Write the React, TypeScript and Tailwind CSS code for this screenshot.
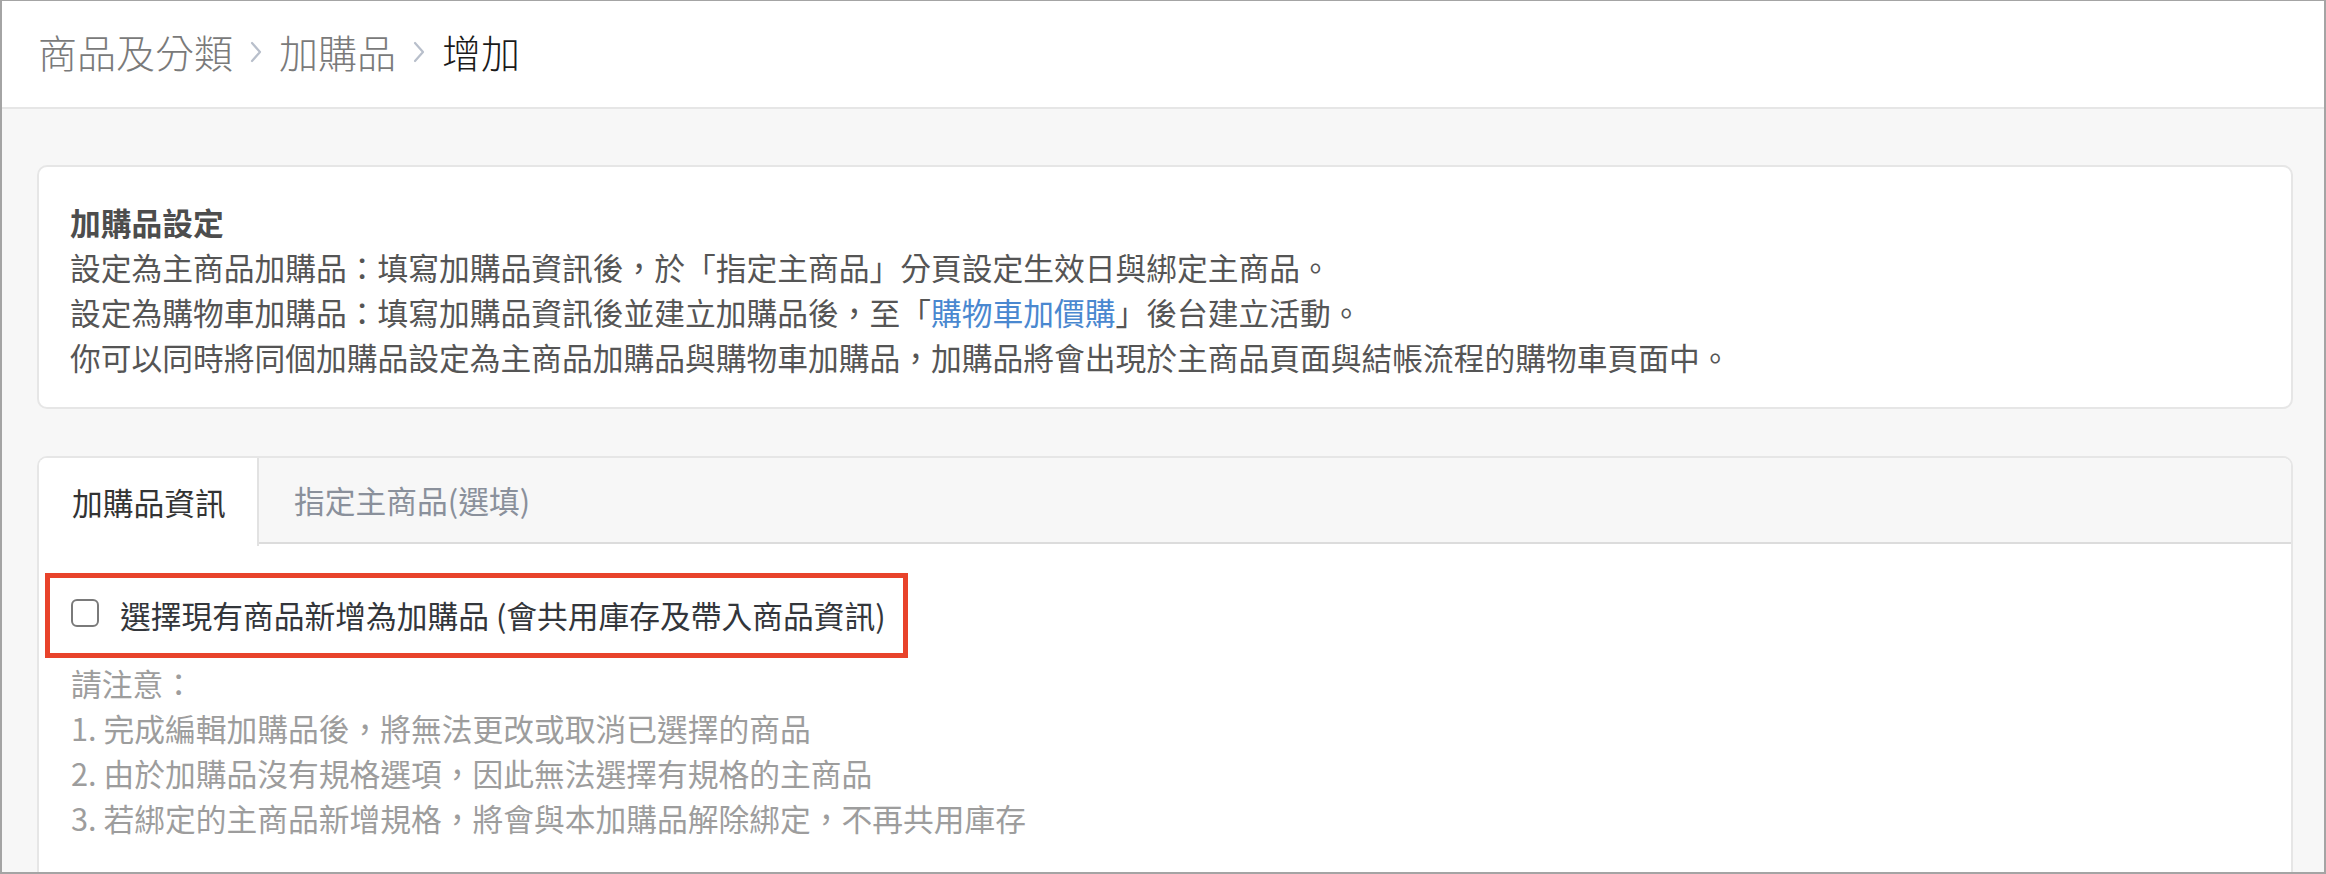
import React from "react";

const font = { fontFamily: '"Noto Sans CJK TC", "Noto Sans", sans-serif' };

function Chevron() {
  return (
    <svg width="14" height="22" viewBox="0 0 14 22" className="mx-[16px] mt-[2px]">
      <path d="M3 2 L11 11 L3 20" fill="none" stroke="#b8bfcb" strokeWidth="2.2" strokeLinecap="round" strokeLinejoin="round" />
    </svg>
  );
}

export default function App() {
  return (
    <div
      className="w-[2326px] h-[874px] border-x-2 border-t border-b-2 border-[#a4a4a4] overflow-hidden bg-[#f7f7f7] flex flex-col"
      style={font}
    >
      <div className="h-[108px] shrink-0 bg-white border-b-2 border-[#e6e6e6] flex items-center pl-[36px] pb-[6px] text-[39px] leading-none font-light">
        <span className="text-[#7a7a7a]">商品及分類</span>
        <Chevron />
        <span className="text-[#7a7a7a]">加購品</span>
        <Chevron />
        <span className="text-[#1a1a1a]">增加</span>
      </div>

      <div className="flex-1 pl-[35px] pr-[31px] pt-[56px] flex flex-col">
        <div className="bg-white border-2 border-[#e6e6e6] rounded-[10px] pl-[31px] pr-[31px] pt-[32px] pb-[28px] text-[30.75px] leading-[45px] text-[#555555]">
          <div className="font-bold text-[#4d4d4d]">加購品設定</div>
          <div>設定為主商品加購品：填寫加購品資訊後，於「指定主商品」分頁設定生效日與綁定主商品。</div>
          <div>
            設定為購物車加購品：填寫加購品資訊後並建立加購品後，至「
            <span className="text-[#4a88d0]">購物車加價購</span>」後台建立活動。
          </div>
          <div>你可以同時將同個加購品設定為主商品加購品與購物車加購品，加購品將會出現於主商品頁面與結帳流程的購物車頁面中。</div>
        </div>

        <div className="mt-[47px] flex-1 bg-white border-2 border-b-0 border-[#e6e6e6] rounded-t-[10px] flex flex-col">
          <div className="h-[86px] flex bg-[#f7f7f7] rounded-t-[8px] text-[30.75px]">
            <div className="w-[220px] h-[88px] bg-white border-r-2 border-[#e2e2e2] rounded-tl-[8px] flex items-center pl-[33px] text-[#333333]">
              加購品資訊
            </div>
            <div className="flex-1 border-b-2 border-[#dcdcdc] flex items-center pl-[35px] text-[#8a909b]">
              指定主商品(選填)
            </div>
          </div>

          <div className="pt-[29px] pl-[6px] text-[30.75px]">
            <div className="w-[863px] h-[85px] border-[5px] border-[#e8432b] flex items-center pl-[21px]">
              <div className="w-[28px] h-[28px] mb-[6px] border-2 border-[#7a7a7a] rounded-[6px] bg-white shrink-0"></div>
              <span className="ml-[21px] text-[#33363b] leading-none">選擇現有商品新增為加購品 (會共用庫存及帶入商品資訊)</span>
            </div>
            <div className="pl-[26px] pt-[2px] leading-[45px] text-[#9d9d9d]">
              <div>請注意：</div>
              <div>1. 完成編輯加購品後，將無法更改或取消已選擇的商品</div>
              <div>2. 由於加購品沒有規格選項，因此無法選擇有規格的主商品</div>
              <div>3. 若綁定的主商品新增規格，將會與本加購品解除綁定，不再共用庫存</div>
            </div>
          </div>
        </div>
      </div>
    </div>
  );
}
